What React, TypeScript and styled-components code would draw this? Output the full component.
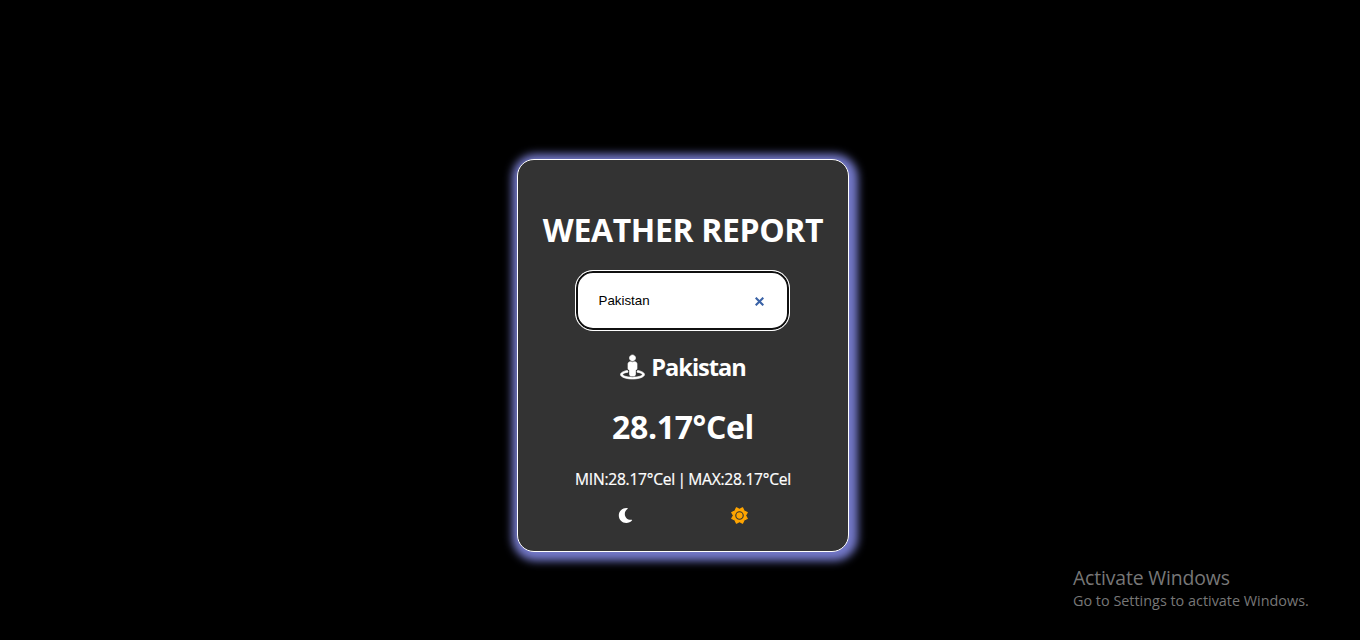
import React from "react";
import styled, { createGlobalStyle } from "styled-components";
import { FaStreetView, FaMoon } from "react-icons/fa";

const GlobalStyle = createGlobalStyle`
  * { box-sizing: border-box; }
  body {
    margin: 0;
    background: #000;
    color: #fff;
    font-family: "Open Sans", "Noto Sans", sans-serif;
    overflow: hidden;
  }
`;

const Page = styled.main`
  position: relative;
  display: flex;
  justify-content: center;
  height: 640px;
  padding: 159px 0 0 6px;
`;

const Card = styled.section`
  display: flex;
  flex-direction: column;
  align-items: center;
  width: 332px;
  height: 393px;
  padding-top: 48px;
  border: 1px solid #fff;
  border-radius: 17px;
  background: #333;
  box-shadow: 2px 2px 8px 7px #7378c8;
  white-space: nowrap;
`;

const Title = styled.h1`
  margin: 0;
  font-size: 32px;
  line-height: 44px;
  letter-spacing: -0.38px;
`;

const SearchBox = styled.label`
  display: flex;
  align-items: center;
  justify-content: space-between;
  width: 215px;
  height: 61px;
  margin: 18px 1px 0 0;
  padding: 0 25px 0 20.5px;
  border: 1px solid #fff;
  border-radius: 18px;
  background: #fff;
  box-shadow: inset 0 0 0 2px #101010;
`;

const SearchInput = styled.input`
  width: 130px;
  padding: 0 2px;
  border: 0;
  outline: 0;
  background: transparent;
  color: #000;
  font: 13.333px "Liberation Sans", Arial, sans-serif;
`;

const ClearIcon = styled.svg`
  width: 9px;
  height: 9px;
  margin-top: 2px;
  stroke: #3a62a6;
  stroke-width: 2.1;
  fill: none;
`;

const Place = styled.h2`
  display: flex;
  align-items: center;
  gap: 6px;
  margin: 20px 0 0;
  font-size: 23.6px;
  line-height: 32px;
  letter-spacing: -1.03px;

  svg {
    width: 25px;
    height: 24px;
    overflow: visible;
    stroke: #fff;
    stroke-width: 14;
  }
`;

const Temperature = styled.p`
  margin: 22px 0 0;
  font-size: 32px;
  font-weight: 700;
  line-height: 44px;
  letter-spacing: -0.35px;
`;

const Range = styled.p`
  margin: 19px 0 0;
  font-size: 15.6px;
  line-height: 22px;
  letter-spacing: -0.26px;
  word-spacing: -1.2px;
  -webkit-text-stroke: 0.2px #fff;
`;

const Modes = styled.div`
  display: flex;
  align-items: center;
  justify-content: space-between;
  width: 130px;
  height: 15px;
  margin-top: 18px;
  font-size: 15px;
`;

const Sun = styled.svg`
  width: 17px;
  height: 17px;
  fill: orange;
  stroke: orange;
  stroke-width: 34;
  stroke-linejoin: round;
`;

const Ring = styled.circle`
  fill: none;
  stroke: #333;
  stroke-width: 34;
`;

const Notice = styled.aside`
  position: absolute;
  left: 1073px;
  top: 565px;
  color: #777;
  white-space: nowrap;
`;

const NoticeTitle = styled.div`
  font-size: 19.4px;
  line-height: 26px;
  letter-spacing: -0.15px;
`;

const NoticeText = styled.div`
  font-size: 14.4px;
  line-height: 20px;
`;

export default function App() {
  return (
    <Page>
      <GlobalStyle />
      <Card>
        <Title>WEATHER REPORT</Title>
        <SearchBox>
          <SearchInput type="text" defaultValue="Pakistan" />
          <ClearIcon viewBox="0 0 9 9"><path d="M.7.7l7.6 7.6M8.3.7L.7 8.3" /></ClearIcon>
        </SearchBox>
        <Place><FaStreetView /><span>Pakistan</span></Place>
        <Temperature>28.17°Cel</Temperature>
        <Range>MIN:28.17°Cel | MAX:28.17°Cel</Range>
        <Modes>
          <FaMoon />
          <Sun viewBox="0 0 512 512">
            <path d="M164 22L256 76L348 22L394 118L490 164L436 256L490 348L394 394L348 490L256 436L164 490L118 394L22 348L76 256L22 164L118 118Z" />
            <Ring cx="256" cy="256" r="112" />
          </Sun>
        </Modes>
      </Card>
      <Notice>
        <NoticeTitle>Activate Windows</NoticeTitle>
        <NoticeText>Go to Settings to activate Windows.</NoticeText>
      </Notice>
    </Page>
  );
}
